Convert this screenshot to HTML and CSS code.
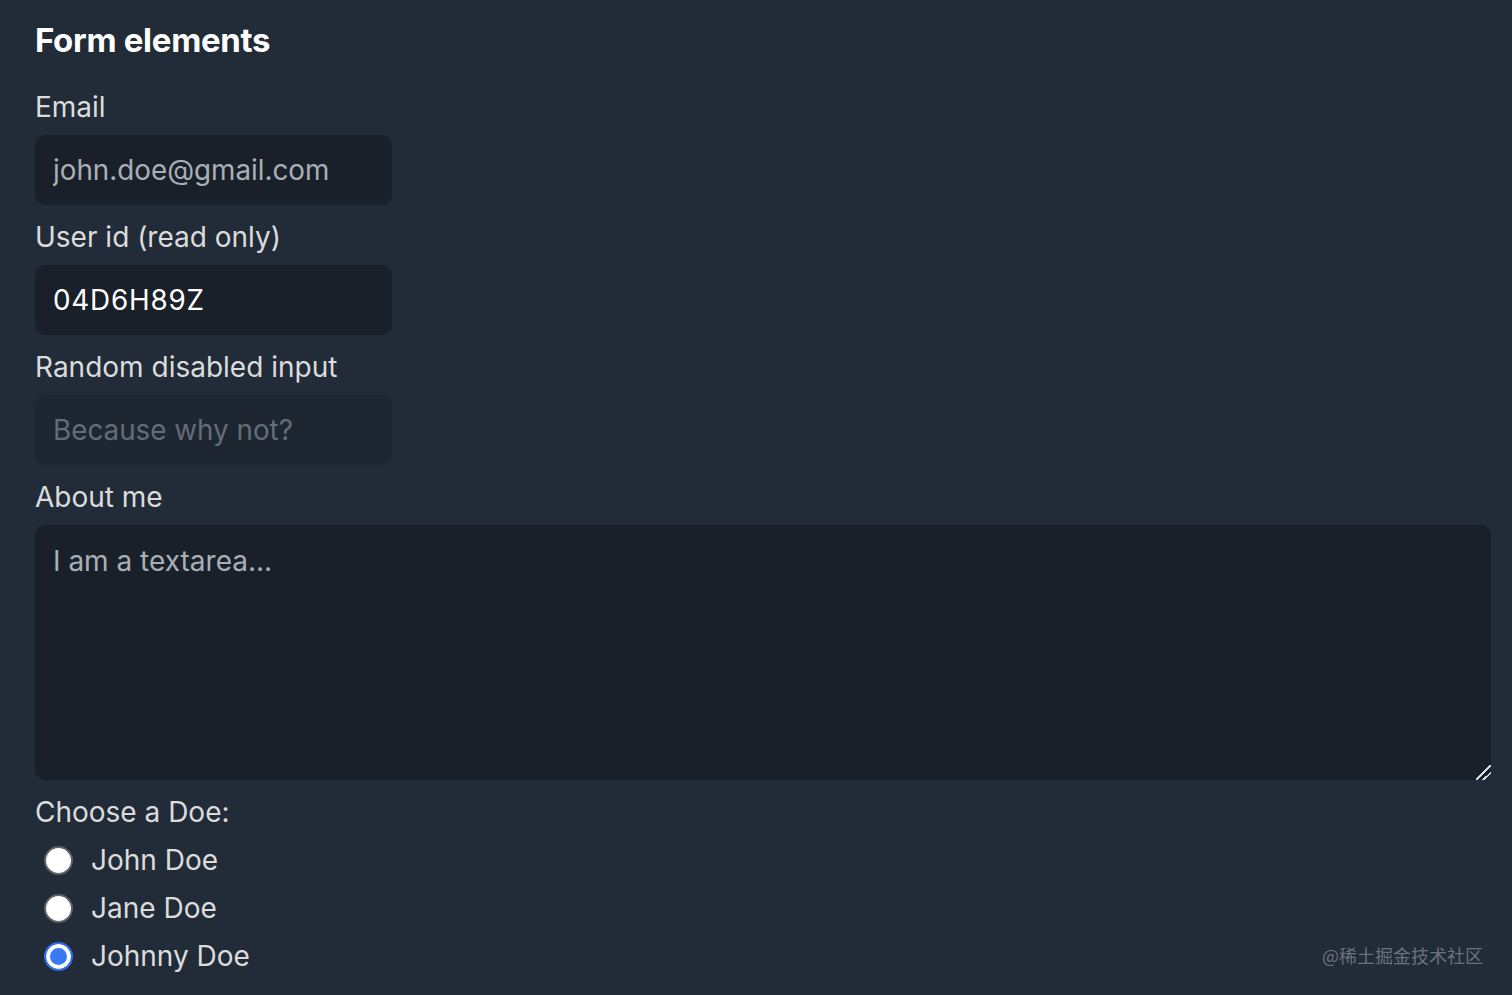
FILE: index.html
```html
<!DOCTYPE html>
<html lang="en">
<head>
<meta charset="utf-8">
<title>Form elements</title>
<link rel="stylesheet" href="styles.css">
</head>
<body>
<main class="page">
  <h2 class="title">Form elements</h2>
  <label class="field-label" for="email">Email</label>
  <input class="field" id="email" type="email" placeholder="john.doe@gmail.com">
  <label class="field-label" for="uid">User id (read only)</label>
  <input class="field" id="uid" type="text" value="04D6H89Z" readonly>
  <label class="field-label" for="rnd">Random disabled input</label>
  <input class="field" id="rnd" type="text" placeholder="Because why not?" disabled>
  <label class="field-label" for="about">About me</label>
  <textarea class="area" id="about" placeholder="I am a textarea..."></textarea>
  <div class="field-label">Choose a Doe:</div>
  <div class="radios">
    <label class="radio-row"><input class="radio" type="radio" name="doe" value="john"><span>John Doe</span></label>
    <label class="radio-row"><input class="radio" type="radio" name="doe" value="jane"><span>Jane Doe</span></label>
    <label class="radio-row"><input class="radio" type="radio" name="doe" value="johnny" checked><span>Johnny Doe</span></label>
  </div>
</main>
<div class="watermark">@稀土掘金技术社区</div>
</body>
</html>
```

FILE: styles.css
```css
html, body {
  margin: 0;
  padding: 0;
  height: 100%;
  background: #222b38;
}
body {
  font-family: Inter, "Noto Sans", "Liberation Sans", sans-serif;
  color: #dcdcdc;
  overflow: hidden;
}
.page {
  display: flex;
  flex-direction: column;
  align-items: flex-start;
  padding: 20px 21px 0 35px;
}
.title {
  margin: 0 0 26px;
  font-size: 33px;
  line-height: 41px;
  font-weight: 700;
  color: #ffffff;
  letter-spacing: -0.3px;
}
.field-label {
  display: block;
  font-size: 28px;
  line-height: 40px;
  margin-bottom: 8px;
  color: #dcdcdc;
}
.field {
  box-sizing: border-box;
  width: 357px;
  height: 70px;
  margin: 0 0 12px;
  padding: 0 18px;
  border: none;
  border-radius: 10px;
  background: #1a2029;
  font-family: inherit;
  font-size: 27.8px;
  color: #ffffff;
  outline: none;
}
#uid {
  letter-spacing: 0.8px;
}
.field::placeholder {
  color: #a8afb7;
  opacity: 1;
}
.field:disabled {
  background: #1e2631;
}
.field:disabled::placeholder {
  color: #646c76;
}
.area {
  box-sizing: border-box;
  width: 100%;
  height: 255px;
  margin: 0 0 12px;
  padding: 18px 18px;
  border: none;
  border-radius: 10px;
  background: #1a2029;
  font-family: inherit;
  font-size: 28px;
  line-height: 36px;
  color: #ffffff;
  outline: none;
  resize: vertical;
}
.area::-webkit-resizer {
  background: linear-gradient(135deg,
    transparent 0, transparent 46%,
    #d8dbe0 46%, #d8dbe0 54%,
    transparent 54%, transparent 70%,
    #d8dbe0 70%, #d8dbe0 78%,
    transparent 78%);
}
.area::placeholder {
  color: #a8afb7;
  opacity: 1;
}
.radios {
  display: flex;
  flex-direction: column;
  margin-top: -4px;
}
.radio-row {
  display: flex;
  align-items: center;
  height: 48px;
  font-size: 28px;
  color: #dcdcdc;
}
.radio {
  appearance: none;
  -webkit-appearance: none;
  box-sizing: border-box;
  width: 29px;
  height: 29px;
  margin: 0 18px 0 9px;
  border-radius: 50%;
  border: 2px solid #5d6066;
  background: #ffffff;
}
.radio:checked {
  border: 2px solid #2f6fe8;
  background: #3879f6;
  box-shadow: inset 0 0 0 4px #ffffff;
}
.watermark {
  position: absolute;
  right: 29px;
  bottom: 28px;
  font-family: "Noto Sans CJK SC", sans-serif;
  font-size: 18px;
  line-height: 24px;
  color: rgba(200, 205, 212, 0.45);
}
```
